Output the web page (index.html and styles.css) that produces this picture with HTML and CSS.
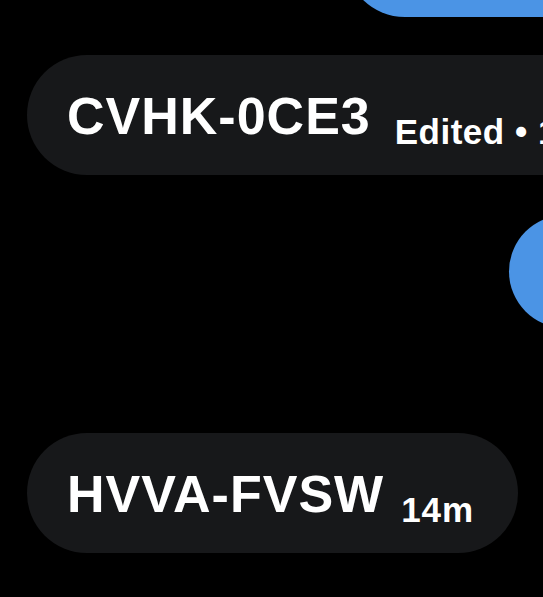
FILE: index.html
```html
<!DOCTYPE html>
<html lang="en">
<head>
    <meta charset="UTF-8">
    <meta name="viewport" content="width=device-width, initial-scale=1.0">
    <title>Messages</title>
    <link rel="stylesheet" href="styles.css">
</head>
<body>

    <div class="thread">
        <div class="bubble-out bubble-top"></div>

        <div class="bubble-in">
            <span class="code">CVHK-0CE3</span><span class="meta meta-edited">Edited &bull; 16m</span>
        </div>

        <div class="bubble-out bubble-round"></div>

        <div class="bubble-in bubble-last">
            <span class="code">HVVA-FVSW</span><span class="meta">14m</span>
        </div>
    </div>

</body>
</html>
```

FILE: styles.css
```css
* {
    margin: 0;
    padding: 0;
    box-sizing: border-box;
}

body {
    font-family: 'Liberation Sans', Arial, sans-serif;
    background: #000;
    color: #fff;
    overflow: hidden;
    height: 100vh;
}

.thread {
    display: flex;
    flex-direction: column;
    padding-left: 27px;
    margin-top: -103px;
}

/* sent messages (blue) */
.bubble-out {
    align-self: flex-end;
    background-color: #4b94e5;
}

.bubble-top {
    width: 260px;
    height: 120px;
    border-radius: 60px;
    margin-right: -62px;
}

.bubble-round {
    width: 150px;
    height: 113px;
    border-radius: 57px;
    margin-top: 40px;
    margin-right: -116px;
}

/* received messages (grey) */
.bubble-in {
    align-self: flex-start;
    background-color: #17181a;
    height: 120px;
    border-radius: 60px;
    padding: 0 44px 0 40px;
    font-size: 52px;
    font-weight: bold;
    line-height: 122px;
    white-space: nowrap;
    margin-top: 38px;
}

.bubble-last {
    margin-top: 105px;
}

.code {
    letter-spacing: 1px;
}

.meta {
    font-size: 35px;
    line-height: 1;
    letter-spacing: 1px;
    vertical-align: -10px;
    margin-left: 17px;
}

.meta-edited {
    margin-left: 24px;
    letter-spacing: 0.5px;
}
```
